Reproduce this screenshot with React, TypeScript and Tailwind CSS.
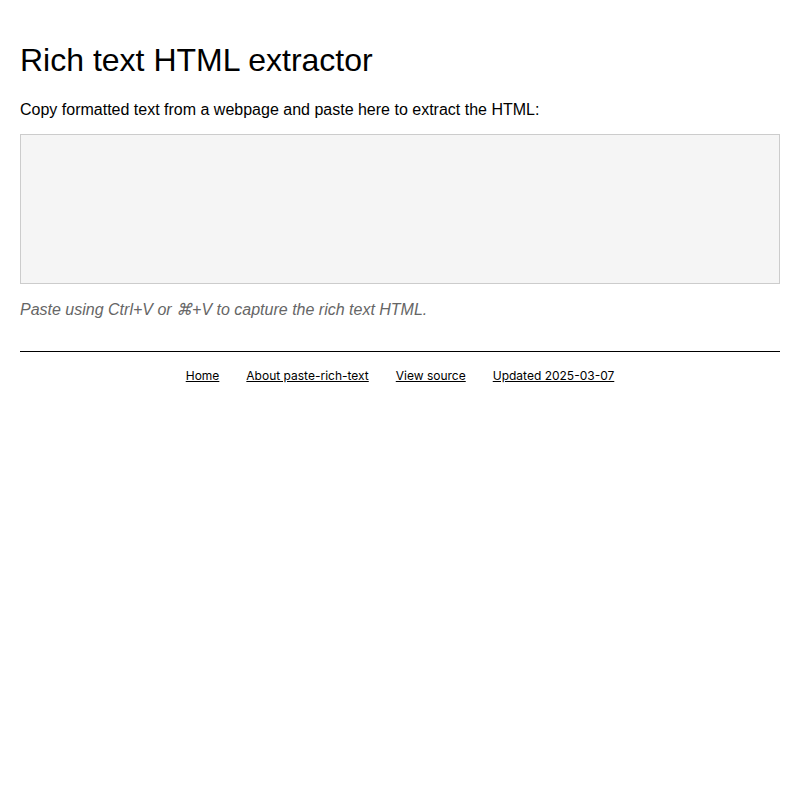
export default function App() {
  const links = ["Home", "About paste-rich-text", "View source", "Updated 2025-03-07"];
  return (
    <div className="bg-white min-h-screen px-5 pt-[42px] font-['Liberation_Sans',Arial,sans-serif] text-black">
      <h1 className="text-[32px] leading-[37px] font-normal">Rich text HTML extractor</h1>
      <p className="mt-[22px] text-base leading-[18px]">
        Copy formatted text from a webpage and paste here to extract the HTML:
      </p>
      <div className="mt-[15px] h-[150px] border border-[#ccc] bg-[#f5f5f5]"></div>
      <p className="mt-[17px] text-base leading-[18px] italic text-[#666]">
        Paste using Ctrl+V or ⌘+V to capture the rich text HTML.
      </p>
      <hr className="mt-[32px] border-t border-black" />
      <nav className="flex justify-center gap-[27px] mt-4 text-[12px] leading-[16px] font-['Inter',sans-serif]">
        {links.map((l) => (
          <a key={l} href="#" className="underline text-black">
            {l}
          </a>
        ))}
      </nav>
    </div>
  );
}
